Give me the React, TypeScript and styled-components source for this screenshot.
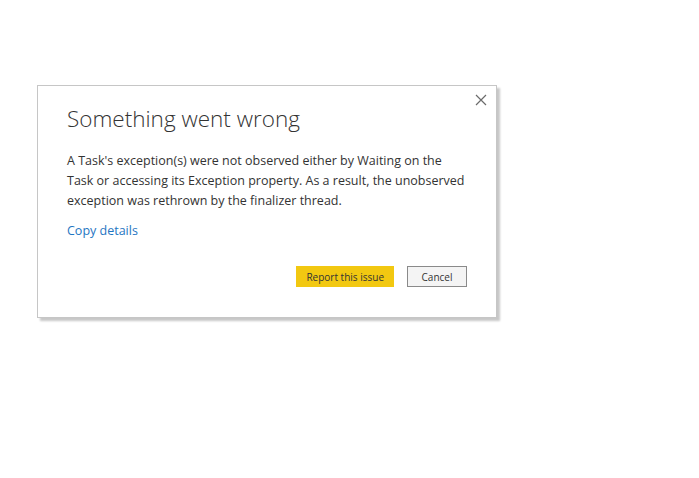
import styled, { createGlobalStyle } from 'styled-components';

const GlobalStyle = createGlobalStyle`
  html, body {
    margin: 0;
    padding: 0;
    background: #ffffff;
  }
  body {
    font-family: "Open Sans", "Liberation Sans", sans-serif;
  }
`;

export default function App() {
  return (
    <Page>
      <GlobalStyle />
      <Dialog role="dialog" aria-labelledby="err-title">
        <CloseButton aria-label="Close">
          <svg width="12" height="12" viewBox="0 0 12 12">
            <path d="M1 1 L11 11 M11 1 L1 11" stroke="#6b6b6b" strokeWidth="1.2" fill="none" />
          </svg>
        </CloseButton>
        <Title id="err-title">Something went wrong</Title>
        <Message>
          A Task's exception(s) were not observed either by Waiting on the Task or accessing its
          Exception property. As a result, the unobserved exception was rethrown by the finalizer
          thread.
        </Message>
        <CopyLink href="#">Copy details</CopyLink>
        <Actions>
          <Button primary>Report this issue</Button>
          <Button>Cancel</Button>
        </Actions>
      </Dialog>
    </Page>
  );
}

const Page = styled.div`
  padding: 85px 0 0 37px;
  min-height: 478px;
  box-sizing: border-box;
`;

const Dialog = styled.div`
  position: relative;
  box-sizing: border-box;
  width: 460px;
  height: 233px;
  padding: 17px 29px 0 29px;
  background: #ffffff;
  border: 1px solid #c6c6c6;
  box-shadow: 3px 3px 2px rgba(0, 0, 0, 0.22);
  display: flex;
  flex-direction: column;
`;

const CloseButton = styled.button`
  position: absolute;
  top: 6px;
  right: 7px;
  width: 16px;
  height: 16px;
  padding: 0;
  border: none;
  background: transparent;
  display: flex;
  align-items: center;
  justify-content: center;
  cursor: pointer;
`;

const Title = styled.h1`
  margin: 0;
  font-size: 22.5px;
  font-weight: 300;
  line-height: 32px;
  color: #333333;
`;

const Message = styled.p`
  margin: 16px 0 0 0;
  font-size: 12.5px;
  line-height: 20px;
  color: #333333;
`;

const CopyLink = styled.a`
  margin-top: 10px;
  font-size: 12.5px;
  line-height: 20px;
  color: #1f76c2;
  text-decoration: none;
  align-self: flex-start;
`;

const Actions = styled.div`
  margin-top: 25px;
  display: flex;
  justify-content: flex-end;
  gap: 13px;
`;

const Button = styled.button<{ primary?: boolean }>`
  box-sizing: border-box;
  height: 21px;
  padding: 0 9px;
  min-width: 60px;
  font-family: "Open Sans", "Liberation Sans", sans-serif;
  font-size: 10px;
  color: #333333;
  background: ${(p) => (p.primary ? '#f2c811' : '#f4f4f4')};
  border: 1px solid ${(p) => (p.primary ? '#f2c811' : '#8a8a8a')};
  cursor: pointer;
`;
